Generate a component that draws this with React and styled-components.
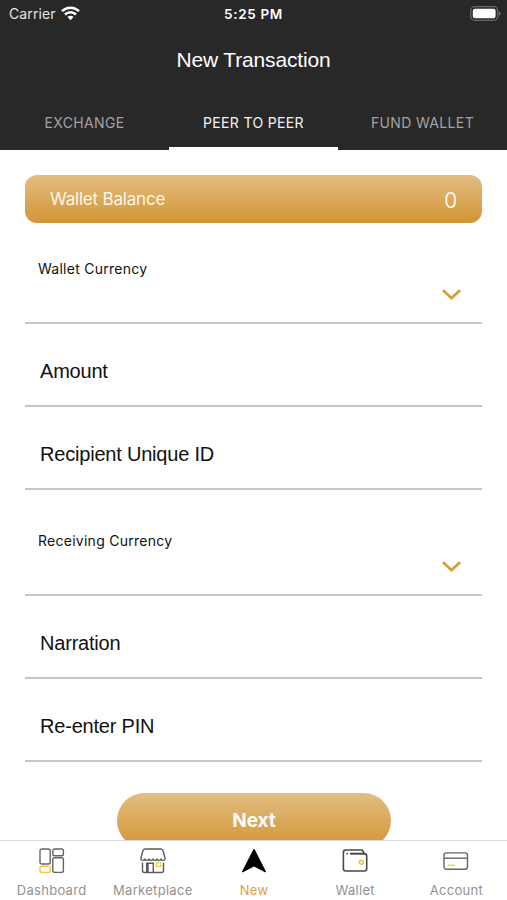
import { useState } from "react";
import styled, { createGlobalStyle } from "styled-components";

const tabs = ["EXCHANGE", "PEER TO PEER", "FUND WALLET"];

const fields = [
  { type: "select", name: "walletCurrency", label: "Wallet Currency" },
  { type: "input", name: "amount", label: "Amount" },
  { type: "input", name: "recipient", label: "Recipient Unique ID" },
  { type: "select", name: "receivingCurrency", label: "Receiving Currency" },
  { type: "input", name: "narration", label: "Narration" },
  { type: "input", name: "pin", label: "Re-enter PIN" },
];

const navItems = [
  { label: "Dashboard", Icon: DashboardIcon },
  { label: "Marketplace", Icon: MarketIcon },
  { label: "New", Icon: NewIcon },
  { label: "Wallet", Icon: WalletIcon },
  { label: "Account", Icon: AccountIcon },
];

function WifiIcon() {
  return (
    <svg width="19" height="15" viewBox="0 0 19 15" fill="none" stroke="#fff" strokeWidth="2.5">
      <path d="M1 5.2a12.2 12.2 0 0 1 17 0" />
      <path d="M4 8.5a7.9 7.9 0 0 1 11 0" />
      <path d="M6.5 11a4.2 4.2 0 0 1 6 0l-3 3.2z" fill="#fff" stroke="none" />
    </svg>
  );
}

function BatteryIcon() {
  return (
    <svg width="31" height="15" viewBox="0 0 31 15">
      <rect x="0.7" y="0.7" width="27" height="13.6" rx="4" fill="none" stroke="#68686a" strokeWidth="1.3" />
      <rect x="2.8" y="2.8" width="22.8" height="9.4" rx="2.2" fill="#fff" />
      <path d="M29 5.2q3 2.3 0 4.6z" fill="#77777a" />
    </svg>
  );
}

function ChevronIcon() {
  return (
    <svg width="20" height="12" viewBox="0 0 20 12" fill="none" stroke="#d79a3c" strokeWidth="2.8">
      <path d="M2.8 2l7.7 7.2L18.200 2" strokeLinecap="round" />
    </svg>
  );
}

function DashboardIcon() {
  return (
    <svg width="26" height="26" viewBox="0 0 26 26" fill="none" stroke="#666" strokeWidth="1.4">
      <rect x="1" y="1" width="10.2" height="15" rx="1.8" />
      <rect x="13.8" y="1" width="10.6" height="6.7" rx="1.8" />
      <rect x="13.8" y="9.8" width="10.6" height="14.6" rx="1.8" />
      <rect x="1" y="18.2" width="10.2" height="6.3" rx="1.8" stroke="#f2c84b" />
    </svg>
  );
}

function MarketIcon() {
  return (
    <svg width="26" height="26" viewBox="0 0 26 26" fill="none" stroke="#5a5a5a" strokeWidth="1.4">
      <path d="M1 10L2.8 3Q3.300 1 5.200 1h15.600q1.900 0 2.400 2L25 10v1q0 1.400-2 1.400-1.500 0-2-1.200-.8 1.200-2 1.200t-2-1.200q-.8 1.200-2 1.200t-2-1.200q-.8 1.200-2 1.200t-2-1.200q-.8 1.200-2 1.200t-2-1.200q-.5 1.200-2 1.200-2 0-2-1.400z" />
      <path d="M2.500 14.500v8q0 2 2 2h17q2 0 2-2v-8" />
      <path d="M6.700 24.500v-9.300h6.600v9.300M8 24v-8" />
      <rect x="16.200" y="14.800" width="4.600" height="3.600" stroke="#edc64f" strokeWidth="1.2" />
    </svg>
  );
}

function NewIcon() {
  return (
    <svg width="26" height="26" viewBox="0 0 26 26">
      <path d="M13 1q.6 0 1 1l10.800 21.200q.6 1.500-.8 1L13 18.600 2 24.200q-1.400.5-.8-1L12 2q.4-1 1-1z" fill="#000" />
    </svg>
  );
}

function WalletIcon() {
  return (
    <svg width="26" height="26" viewBox="0 0 26 26" fill="none" stroke="#484848" strokeWidth="1.6">
      <path d="M3.800 2h15.400q2 0 2.800 3.600 2.700 0 2.700 2.400v12.800q0 2.200-2.200 2.200H3.600q-2.200 0-2.200-2.200V4.300Q1.400 2 3.800 2z" />
      <path d="M8 5.700h14.500" strokeWidth="2" />
      <path d="M4.400 5.700h1.700" />
      <circle cx="19.300" cy="14.200" r="1.900" stroke="#e9c650" strokeWidth="1.700" />
    </svg>
  );
}

function AccountIcon() {
  return (
    <svg width="26" height="26" viewBox="0 0 26 26" fill="none" stroke="#666" strokeWidth="1.4">
      <rect x="1" y="4.900" width="23.500" height="16.400" rx="2.500" />
      <path d="M1 10.200h23.500" />
      <path d="M4.600 17.200h7.600" stroke="#efcf5e" />
    </svg>
  );
}

// One form line, either a dropdown or a plain text line
function FormField({ field }) {
  if (field.type === "select") {
    return (
      <SelectRow>
        <SelectLabel>{field.label}</SelectLabel>
        <ChevronWrapper>
          <ChevronIcon />
        </ChevronWrapper>
      </SelectRow>
    );
  }
  return (
    <InputRow>
      <Input name={field.name} placeholder={field.label} aria-label={field.label} />
    </InputRow>
  );
}

function App() {
  const [activeTab, setActiveTab] = useState(1);

  return (
    <Screen>
      <GlobalStyle />
      <Header>
        <StatusBar>
          <Carrier>
            <span>Carrier</span>
            <WifiIcon />
          </Carrier>
          <Time>5:25 PM</Time>
          <Battery>
            <BatteryIcon />
          </Battery>
        </StatusBar>
        <Title>New Transaction</Title>
        <TabList>
          {tabs.map((tab, i) => (
            <Tab key={tab} $active={i === activeTab} onClick={() => setActiveTab(i)}>
              {tab}
            </Tab>
          ))}
        </TabList>
      </Header>
      <Content>
        <BalanceCard>
          <BalanceLabel>Wallet Balance</BalanceLabel>
          <BalanceValue>0</BalanceValue>
        </BalanceCard>
        {fields.map((field) => (
          <FormField key={field.name} field={field} />
        ))}
        <NextButton>Next</NextButton>
      </Content>
      <BottomNav>
        {navItems.map(({ label, Icon }) => (
          <NavItem key={label} $active={label === "New"}>
            <Icon />
            <NavLabel>{label}</NavLabel>
          </NavItem>
        ))}
      </BottomNav>
    </Screen>
  );
}

export default App;

const GlobalStyle = createGlobalStyle`
  * {
    box-sizing: border-box;
  }
  body {
    margin: 0;
    background: #fff;
    font-family: Inter, "Liberation Sans", sans-serif;
  }
  button, input {
    font-family: inherit;
    border: none;
    background: none;
    padding: 0;
  }
  svg {
    display: block;
    flex-shrink: 0;
  }
`;

const Screen = styled.div`
  width: 507px;
  height: 900px;
  display: flex;
  flex-direction: column;
  overflow: hidden;
`;
const Header = styled.header`
  height: 150px;
  flex-shrink: 0;
  display: flex;
  flex-direction: column;
  background: #282828;
  color: #fff;
`;
const StatusBar = styled.div`
  height: 27px;
  display: grid;
  grid-template-columns: 1fr auto 1fr;
  align-items: center;
  padding: 0 6px 0 9px;
`;
const Carrier = styled.div`
  display: flex;
  align-items: center;
  gap: 5px;
  font-size: 14px;
  letter-spacing: 0.1px;
  color: #e4e4e4;
`;
const Time = styled.div`
  font-size: 13.5px;
  font-weight: 600;
  letter-spacing: 0.65px;
  margin-right: 3px;
`;
const Battery = styled.div`
  justify-self: end;
`;
const Title = styled.h1`
  height: 67px;
  margin: 0;
  font-family: "Liberation Sans", Arial, sans-serif;
  font-size: 21px;
  font-weight: 400;
  line-height: 66px;
  letter-spacing: -0.17px;
  text-align: center;
`;
const TabList = styled.div`
  flex: 1;
  display: grid;
  grid-template-columns: repeat(3, 1fr);
`;
const Tab = styled.button`
  padding-top: 4px;
  font-size: 14px;
  letter-spacing: 0.35px;
  color: ${({ $active }) => ($active ? "#f4f4f4" : "#a3a3a3")};
  border-bottom: 3px solid ${({ $active }) => ($active ? "#fff" : "transparent")};
`;
const Content = styled.main`
  flex: 1;
  min-height: 0;
  display: flex;
  flex-direction: column;
  padding: 25px 25px 0;
  overflow: hidden;
`;
const BalanceCard = styled.div`
  height: 48px;
  flex-shrink: 0;
  display: flex;
  align-items: center;
  justify-content: space-between;
  padding: 0 25px;
  border-radius: 12px;
  background: linear-gradient(#e3bd82, #d39534);
  color: #fff7ea;
`;
const BalanceLabel = styled.span`
  font-size: 17px;
  letter-spacing: -0.2px;
`;
const BalanceValue = styled.span`
  font-family: "Open Sans", sans-serif;
  font-size: 22.5px;
`;
const Row = styled.div`
  flex-shrink: 0;
  border-bottom: 2px solid #c6c6c6;
`;
const SelectRow = styled(Row)`
  height: 106px;
  padding: 42px 21px 0 13px;
  ${BalanceCard} + & {
    height: 101px;
    padding-top: 37px;
  }
`;
const SelectLabel = styled.div`
  font-size: 14px;
  line-height: 18px;
  letter-spacing: 0.26px;
  color: #111;
`;
const ChevronWrapper = styled.div`
  display: flex;
  justify-content: flex-end;
  padding-top: 11px;
`;
const InputRow = styled(Row)`
  height: 83px;
  display: flex;
  padding: 13px 15px 0;
`;
const Input = styled.input`
  width: 100%;
  font-family: "Liberation Sans", Arial, sans-serif;
  font-size: 20px;
  letter-spacing: -0.2px;
  outline: none;
  &::placeholder {
    color: #111;
    opacity: 1;
  }
`;
const NextButton = styled.button`
  width: 274px;
  height: 55px;
  flex-shrink: 0;
  align-self: center;
  margin: 31px 0 0 1px;
  border-radius: 28px;
  background: linear-gradient(#e3bd82, #d39534);
  color: #fff;
  font-size: 19px;
  font-weight: 700;
`;
const BottomNav = styled.nav`
  height: 60px;
  flex-shrink: 0;
  display: grid;
  grid-template-columns: repeat(5, 1fr);
  padding-left: 1px;
  border-top: 1px solid #dadada;
  background: #fff;
`;
const NavItem = styled.div`
  display: flex;
  flex-direction: column;
  align-items: center;
  padding-top: 7px;
  color: ${({ $active }) => ($active ? "#dd9e42" : "#929292")};
`;
const NavLabel = styled.span`
  margin-top: 7px;
  font-size: 13px;
  line-height: 18px;
  letter-spacing: 0.3px;
`;
